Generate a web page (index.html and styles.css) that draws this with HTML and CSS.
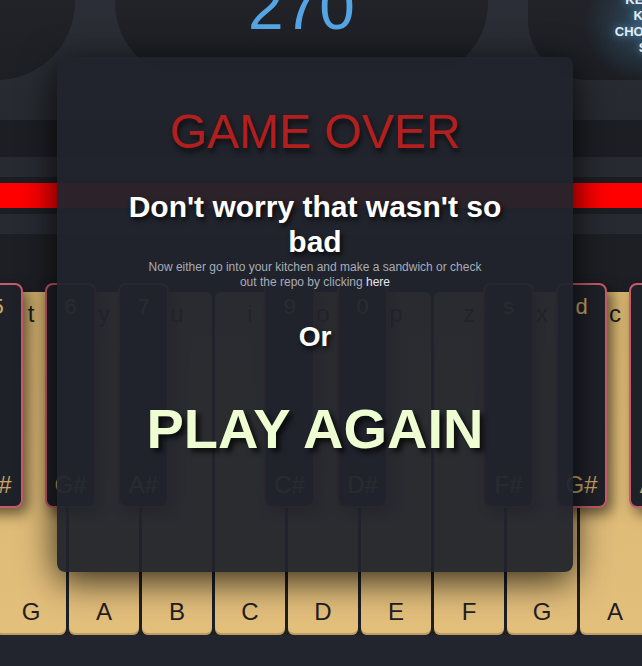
FILE: index.html
```html
<!DOCTYPE html>
<html lang="en">
<head>
<meta charset="utf-8">
<title>Piano – Game Over</title>
<link rel="stylesheet" href="styles.css">
</head>
<body>
<div class="app">
  <header class="top">
    <div class="panel panel-left"></div>
    <div class="panel panel-score"><span class="score">270</span></div>
    <div class="panel panel-right">
      <div class="toggle">KEYS<br>KB<br>CHORDS<br>S</div>
    </div>
  </header>

  <div class="lanes">
    <div class="lane lane-light lane-first"></div>
    <div class="lane lane-dark lane-tall"></div>
    <div class="lane lane-light"></div>
    <div class="lane lane-dark lane-thin"></div>
    <div class="lane lane-red"></div>
    <div class="lane lane-dark lane-thin"></div>
    <div class="lane lane-light"></div>
    <div class="lane lane-dark lane-fill"></div>
  </div>

  <div class="piano">
    <div class="whites">
      <div class="white"><span>t</span><span>G</span></div>
      <div class="white"><span>y</span><span>A</span></div>
      <div class="white"><span>u</span><span>B</span></div>
      <div class="white"><span>i</span><span>C</span></div>
      <div class="white"><span>o</span><span>D</span></div>
      <div class="white"><span>p</span><span>E</span></div>
      <div class="white"><span>z</span><span>F</span></div>
      <div class="white"><span>x</span><span>G</span></div>
      <div class="white"><span>c</span><span>A</span></div>
    </div>
    <div class="blacks">
      <div class="black"><span class="bk-top">5</span><span class="bk-note">F#</span></div>
      <div class="black"><span class="bk-top">6</span><span class="bk-note">G#</span></div>
      <div class="black"><span class="bk-top">7</span><span class="bk-note">A#</span></div>
      <div class="black black-none"></div>
      <div class="black"><span class="bk-top">9</span><span class="bk-note">C#</span></div>
      <div class="black"><span class="bk-top">0</span><span class="bk-note">D#</span></div>
      <div class="black black-none"></div>
      <div class="black"><span class="bk-top">s</span><span class="bk-note">F#</span></div>
      <div class="black"><span class="bk-top">d</span><span class="bk-note">G#</span></div>
      <div class="black"><span class="bk-top">f</span><span class="bk-note">A#</span></div>
    </div>
  </div>

  <div class="floor"></div>
</div>

<div class="modal">
  <h1 class="title">GAME OVER</h1>
  <h2 class="sub">Don't worry that wasn't so bad</h2>
  <p class="note">Now either go into your kitchen and make a sandwich or check out the repo by clicking <a class="here" href="#">here</a></p>
  <div class="or">Or</div>
  <div class="play">PLAY AGAIN</div>
</div>
</body>
</html>
```

FILE: styles.css
```css
html, body {
  margin: 0;
  padding: 0;
}

body {
  width: 642px;
  height: 666px;
  overflow: hidden;
  position: relative;
  background: #22252d;
  font-family: "Liberation Sans", Arial, sans-serif;
}

.app {
  display: flex;
  flex-direction: column;
  height: 666px;
}

/* ---------- top panels ---------- */
.top {
  flex: none;
  height: 80px;
  display: flex;
  background: linear-gradient(180deg, #2b2e36 0%, #282b32 100%);
}

.panel {
  flex: none;
}

.panel-left {
  width: 155px;
  height: 80px;
  margin-left: -80px;
  border-radius: 0 0 78px 0;
  background: linear-gradient(180deg, #212329 0%, #1d1f24 100%);
}

.panel-score {
  width: 373px;
  height: 72px;
  margin-left: 40px;
  border-radius: 0 0 60px 60px / 0 0 70px 70px;
  background: linear-gradient(180deg, #212329 0%, #1c1e23 100%);
  display: flex;
  justify-content: center;
  overflow: hidden;
}

.score {
  display: block;
  margin-top: -25px;
  font-size: 64px;
  line-height: 64px;
  color: #55a5e4;
}

.panel-right {
  width: 230px;
  height: 80px;
  margin-left: 40px;
  border-radius: 0 0 0 60px;
  background:
    radial-gradient(ellipse 62px 58px at 118px 24px, rgba(70, 130, 170, 0.42), rgba(70, 130, 170, 0) 100%),
    linear-gradient(180deg, #212329 0%, #1c1e23 100%);
  overflow: hidden;
}

.toggle {
  margin-top: -8px;
  text-align: center;
  font-size: 13px;
  line-height: 16px;
  font-weight: bold;
  color: #e2edf6;
  text-shadow: 0 0 8px rgba(110, 180, 230, 0.9);
}

/* ---------- lanes ---------- */
.lanes {
  flex: none;
  display: flex;
  flex-direction: column;
  height: 203px;
}

.lane {
  flex: none;
}

.lane-light {
  height: 20px;
  background: #272a31;
}

.lane-first {
  height: 40px;
  background: linear-gradient(180deg, #282b32 0%, #26292f 100%);
}

.lane-dark {
  background: #1c1e23;
}

.lane-tall {
  height: 37px;
}

.lane-thin {
  height: 6px;
}

.lane-red {
  height: 25px;
  background: #ff0000;
}

.lane-fill {
  flex: 1;
  background: #1d1f24;
}

/* ---------- piano ---------- */
.piano {
  flex: none;
  position: relative;
  height: 352px;
  background: #1d1f24;
}

.whites {
  display: flex;
  gap: 3px;
  margin-left: -4px;
  padding-top: 9px;
}

.white {
  flex: none;
  width: 70px;
  height: 343px;
  box-sizing: border-box;
  padding: 8px 0 9px;
  border-radius: 6px;
  background: linear-gradient(180deg, #d8b571 0%, #e3bf7c 100%);
  box-shadow: inset 0 -2px 0 rgba(120, 90, 40, 0.35);
  display: flex;
  flex-direction: column;
  justify-content: space-between;
  align-items: center;
  font-size: 24px;
  line-height: 28px;
  color: #1f2023;
}

.blacks {
  position: absolute;
  top: 0;
  left: -28px;
  display: flex;
  gap: 22px;
}

.black {
  flex: none;
  width: 51px;
  height: 225px;
  box-sizing: border-box;
  padding: 9px 0 7px;
  border: 2px solid #c65a6c;
  border-radius: 8px;
  background: #1f2128;
  box-shadow: 5px 6px 14px rgba(0, 0, 0, 0.55);
  display: flex;
  flex-direction: column;
  justify-content: space-between;
  align-items: center;
  color: #caa567;
}

.black-none {
  visibility: hidden;
}

.bk-top {
  font-size: 22px;
  line-height: 26px;
}

.bk-note {
  font-size: 24px;
  line-height: 28px;
}

.floor {
  flex: 1;
  background: #22252d;
}

/* ---------- modal ---------- */
.modal {
  position: absolute;
  left: 57px;
  top: 57px;
  width: 516px;
  height: 515px;
  box-sizing: border-box;
  padding-top: 47px;
  border-radius: 8px;
  background: rgba(33, 36, 44, 0.95);
  box-shadow: 0 8px 36px rgba(0, 0, 0, 0.8);
  display: flex;
  flex-direction: column;
  align-items: center;
  text-align: center;
}

.title {
  margin: 0;
  font-size: 48px;
  line-height: 55px;
  font-weight: normal;
  color: #b21f1f;
  text-shadow: 2px 4px 5px rgba(0, 0, 0, 0.6);
}

.sub {
  margin: 30px 0 0;
  width: 400px;
  font-size: 30px;
  line-height: 35px;
  font-weight: bold;
  color: #ffffff;
  text-shadow: 2px 3px 5px rgba(0, 0, 0, 0.75);
}

.note {
  margin: 1px 0 0;
  width: 345px;
  font-size: 12px;
  line-height: 15px;
  color: #a7acb7;
}

.here {
  color: #e2e6ee;
  text-decoration: none;
}

.or {
  margin-top: 31px;
  font-size: 28px;
  line-height: 32px;
  font-weight: bold;
  color: #ffffff;
  text-shadow: 2px 3px 5px rgba(0, 0, 0, 0.75);
}

.play {
  margin-top: 44px;
  font-size: 56px;
  line-height: 63px;
  font-weight: bold;
  color: #eefed2;
  text-shadow: 4px 4px 5px rgba(0, 0, 0, 0.7);
}
```
